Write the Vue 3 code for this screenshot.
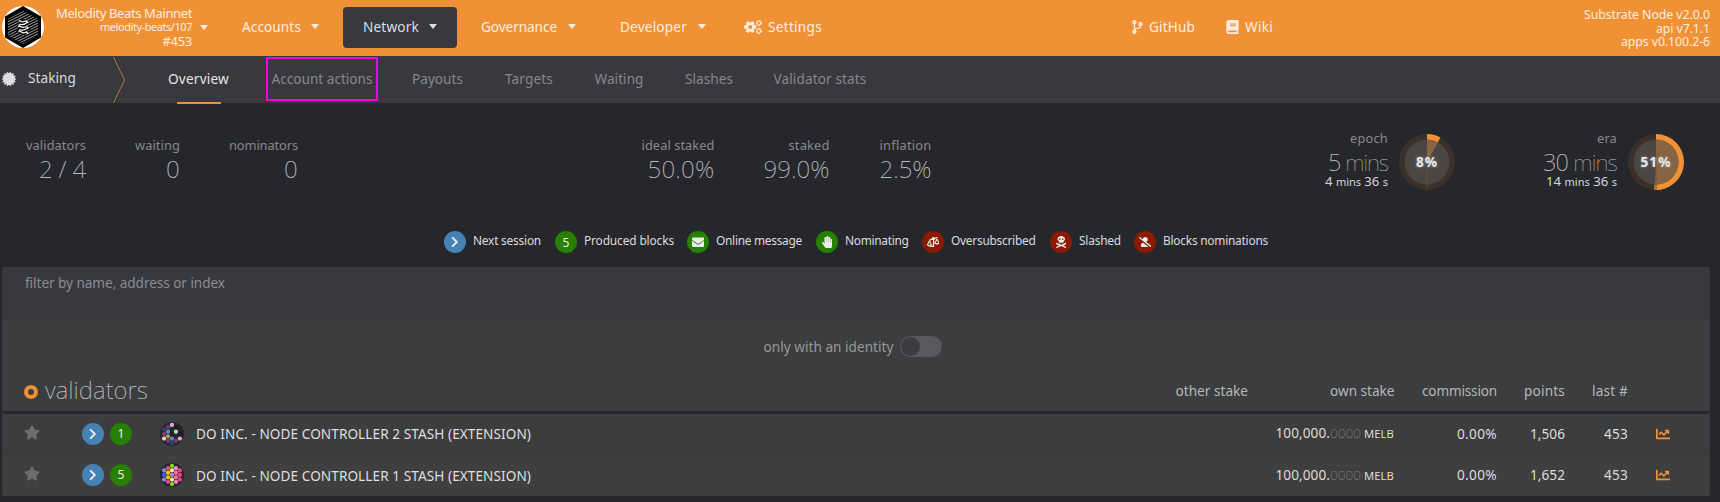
<script setup>
// Sets a label to its designed width by spreading the difference over its letters.
const vFit = {
  mounted(el, { value }) {
    const natural = el.getBoundingClientRect().width
    const count = el.textContent.trim().length
    el.style.letterSpacing = `${(value - natural) / count}px`
  }
}

const menu = [
  { label: 'Accounts', width: 59, active: false },
  { label: 'Network', width: 56, active: true },
  { label: 'Governance', width: 76, active: false },
  { label: 'Developer', width: 67, active: false }
]

const tabs = [
  { label: 'Overview', width: 61, active: true },
  { label: 'Account actions', width: 101, marked: true },
  { label: 'Payouts', width: 51 },
  { label: 'Targets', width: 48 },
  { label: 'Waiting', width: 49 },
  { label: 'Slashes', width: 48 },
  { label: 'Validator stats', width: 93 }
]

const counts = [
  { label: 'validators', lw: 60, value: '2 / 4', vw: 47 },
  { label: 'waiting', lw: 45, value: '0', vw: 14 },
  { label: 'nominators', lw: 69, value: '0', vw: 14 }
]

const rates = [
  { label: 'ideal staked', lw: 73, value: '50.0%', vw: 67 },
  { label: 'staked', lw: 41, value: '99.0%', vw: 66 },
  { label: 'inflation', lw: 52, value: '2.5%', vw: 52 }
]

function arc(pct, r) {
  const a = pct * 2 * Math.PI
  return `M28 28V${28 - r}A${r} ${r} 0 ${pct > 0.5 ? 1 : 0} 1 ${28 + r * Math.sin(a)} ${28 - r * Math.cos(a)}Z`
}

const timers = [
  { label: 'epoch', lw: 38, num: '5', vw: 60, rest: ['4', '36'], rw: 63, pct: 0.08, text: '8%', tw: 22 },
  { label: 'era', lw: 20, num: '30', vw: 74, rest: ['14', '36'], rw: 71, pct: 0.51, text: '51%', tw: 31 }
]

const icons = {
  chevron: { box: '0 0 320 512', d: 'M285.476 272.971L91.132 467.314c-9.373 9.373-24.569 9.373-33.941 0l-22.667-22.667c-9.357-9.357-9.375-24.522-.04-33.901L188.505 256 34.484 101.255c-9.335-9.379-9.317-24.544.04-33.901l22.667-22.667c9.373-9.373 24.569-9.373 33.941 0L285.475 239.03c9.373 9.372 9.373 24.568.001 33.941z' },
  envelope: { box: '0 0 512 512', d: 'M502.3 190.8c3.9-3.1 9.7-.2 9.7 4.7V400c0 26.5-21.5 48-48 48H48c-26.5 0-48-21.5-48-48V195.6c0-5 5.7-7.8 9.7-4.7 22.4 17.4 52.1 39.5 154.1 113.6 21.1 15.4 56.7 47.8 92.2 47.6 35.7.3 72-32.8 92.3-47.6 102-74.1 131.6-96.3 154-113.7zM256 320c23.2.4 56.6-29.2 73.4-41.4 132.7-96.3 142.8-104.7 173.4-128.7 5.8-4.5 9.2-11.5 9.2-18.9v-19c0-26.5-21.5-48-48-48H48c-26.5 0-48 21.5-48 48v19c0 7.4 3.4 14.3 9.2 18.9 30.6 23.9 40.7 32.4 173.4 128.7 16.8 12.2 50.2 41.8 73.4 41.4z' },
  hand: { box: '0 0 448 512', d: 'M408.781 128.007C386.356 127.578 368 146.36 368 168.79V256h-8V79.79c0-22.43-18.356-41.212-40.781-40.783C297.488 39.423 280 57.169 280 79v177h-8V40.79C272 18.36 253.644-.422 231.219.007 209.488.423 192 18.169 192 40v216h-8V80.79c0-22.43-18.356-41.212-40.781-40.783C121.488 40.423 104 58.169 104 80v235.992l-31.648-43.519c-12.993-17.866-38.009-21.817-55.877-8.823-17.865 12.994-21.815 38.01-8.822 55.877l125.601 172.705A48 48 0 0 0 172.073 512h197.59c22.274 0 41.622-15.324 46.724-37.006l26.508-112.66a192.011 192.011 0 0 0 5.104-43.975V168c.001-21.831-17.487-39.577-39.218-39.993z' },
  scale: { box: '0 0 640 512', d: 'M96 464v32c0 9 7 16 16 16h224c18 0 32-14 32-32V153c24-10 42-31 47-57l118-39c8-3 13-12 10-20l-10-31c-3-8-12-13-20-10L393 38C378 15 351 0 320 0c-44 0-80 36-80 80 0 4 1 7 1 11L107 136c-8 3-13 12-10 20l10 31c3 8 12 13 20 10l142-47c9 5 17 4 35 3v295H112c-9 0-16 7-16 16zM640 304c0-16 1-9-85-182-18-35-68-35-86 0-88 175-85 167-85 182 0 44 57 80 128 80s128-36 128-80zM512 160l72 144H440zM256 400c0-16 1-9-85-182-18-35-68-35-86 0C-3 393 0 385 0 400c0 44 57 80 128 80s128-36 128-80zM128 256l72 144H56z' },
  skull: { box: '0 0 448 512', d: 'M224 0C135 0 64 57 64 128c0 42 26 80 66 103v34c0 13 11 23 24 23h140c13 0 24-10 24-23v-34c40-23 66-61 66-103C384 57 313 0 224 0zM160 168a36 36 0 1 1 0-72 36 36 0 0 1 0 72zM288 168a36 36 0 1 1 0-72 36 36 0 0 1 0 72zM38 292c-8-4-18-1-22 7L2 328c-4 8-1 18 7 22l128 59L9 468c-8 4-11 14-7 22l14 14c4 8 14 11 22 7l186-84 186 84c8 4 18 1 22-7l14-14c4-8 1-18-7-22l-128-59 128-59c8-4 11-14 7-22l-14-29c-4-8-14-11-22-7l-186 82z' },
  slash: { box: '0 0 640 512', d: 'M633.8 458.1L362.3 248.3C412.1 230.7 448 183.8 448 128 448 57.3 390.7 0 320 0c-67.1 0-121.5 51.8-126.9 117.4L45.5 3.4C38.5-2 28.5-.8 23 6.2L3.4 31.4c-5.4 7-4.2 17 2.8 22.4l588.4 454.7c7 5.5 17 4.2 22.5-2.8l19.6-25.3c5.4-6.8 4.1-16.9-2.9-22.3zM96 422.4V464c0 26.5 21.5 48 48 48h350.2L207.4 290.3C144.2 301.3 96 356 96 422.4z' }
}

const legend = [
  { label: 'Next session', width: 68, color: 'blue', icon: 'chevron', pitch: 111 },
  { label: 'Produced blocks', width: 90, color: 'green', text: '5', pitch: 132 },
  { label: 'Online message', width: 86, color: 'green', icon: 'envelope', pitch: 129 },
  { label: 'Nominating', width: 63.5, color: 'green', icon: 'hand', pitch: 106 },
  { label: 'Oversubscribed', width: 84.5, color: 'red', icon: 'scale', pitch: 128 },
  { label: 'Slashed', width: 42, color: 'red', icon: 'skull', pitch: 84 },
  { label: 'Blocks nominations', width: 105, color: 'red', icon: 'slash', pitch: 140 }
]

const rows = [
  {
    name: 'DO INC. - NODE CONTROLLER 2 STASH (EXTENSION)', blocks: '1', points: '1,506',
    dots: [
      ['#3b3a78', '#7b3b80', '#e6d4b2'],
      ['#74397a', '#5b88b6', '#9ea651', '#7b3b80'],
      ['#dba8d0', '#14301c', '#33171f', '#5b88b6', '#3b3a78'],
      ['#1d1838', '#a8dcba', '#18331f', '#7b3b80'],
      ['#3b1a1c', '#1d1838', '#dfa8d4']
    ]
  },
  {
    name: 'DO INC. - NODE CONTROLLER 1 STASH (EXTENSION)', blocks: '5', points: '1,652',
    dots: [
      ['#9181f5', '#2f62f5', '#9181f5'],
      ['#ee4697', '#f2c714', '#f2c714', '#ee4697'],
      ['#7ade1c', '#f3ef83', '#bd86ea', '#f3ef83', '#7ade1c'],
      ['#f684c6', '#f5759c', '#f5759c', '#f684c6'],
      ['#f2418a', '#f2418a', '#f2418a']
    ]
  }
].map((row) => ({
  ...row,
  circles: row.dots.flatMap((col, i) =>
    col.map((fill, j) => ({ fill, cx: 12 + (i - 2) * 3.95, cy: 12 + (j - (col.length - 1) / 2) * 4.55 }))
  )
}))

// Toothed outline used by the seal and the gears.
function teeth(cx, cy, n, inner, outer, duty) {
  const pts = []
  for (let i = 0; i < n; i++) {
    const step = (2 * Math.PI) / n
    for (const [o, r] of [[-0.5 * duty, outer], [0.5 * duty, outer], [0.5 * duty + 0.12, inner], [0.88 - 0.5 * duty, inner]]) {
      const a = (i + o) * step
      pts.push(`${(cx + r * Math.cos(a)).toFixed(2)},${(cy + r * Math.sin(a)).toFixed(2)}`)
    }
  }
  return pts.join(' ')
}
const seal = teeth(7, 7, 14, 6, 7.1, 0.35)
const gear = teeth(6.2, 7, 6, 4.6, 6.3, 0.45)
const hatch = Array.from({ length: 16 }, (_, i) => -14 + i * 2.7)
</script>

<template>
  <div class="page">
    <header class="top">
      <svg class="logo" viewBox="0 0 42 42">
        <defs><clipPath id="hex"><path d="M21 5 36 13V29.5L21 38 6 29.5V13Z" /></clipPath></defs>
        <circle cx="21" cy="21" r="21" fill="#fff" />
        <path d="M21 0 39 10.4V31.6L21 42 3 31.6V10.4Z" fill="#050505" />
        <g clip-path="url(#hex)" stroke="#c4c4c4" stroke-width=".8">
          <path v-for="y in hatch" :key="y" :d="`M4 ${y + 20}L38 ${y + 3}`" />
        </g>
        <path d="M19 14 23 17 18 20 24 23 18 25 24 28" fill="none" stroke="#050505" stroke-width="4" />
        <path d="M17 14Q19 16.500 22 15.500T26 17M26 16Q22 19 19.500 18.500T16.500 21M17 19.500Q20 22 23 21T26 23M26 21.500Q22 25 19.500 24T17 26M18 25Q21 27.500 23 26.500T26 28" fill="none" stroke="#fff" stroke-width="1.2" />
      </svg>
      <div class="chain">
        <div><span v-fit="136">Melodity Beats Mainnet</span></div>
        <div class="small"><span v-fit="92">melodity-beats/107</span></div>
        <div class="block"><span v-fit="29.5">#453</span></div>
      </div>
      <i class="caret chain-caret"></i>
      <nav class="menu">
        <a v-for="m in menu" :key="m.label" :class="{ active: m.active }">
          <span v-fit="m.width">{{ m.label }}</span><i class="caret"></i>
        </a>
      </nav>
      <a class="settings">
        <svg width="18" height="14" viewBox="0 0 18 14">
          <polygon :points="gear" /><circle cx="6.2" cy="7" r="2.1" class="hole" />
          <circle cx="15" cy="3" r="2.1" class="ring" /><circle cx="15" cy="11" r="2.1" class="ring" />
        </svg>
        <span v-fit="54">Settings</span>
      </a>
      <a class="github">
        <svg width="11" height="14" viewBox="0 0 384 512"><path d="M384 144c0-44.2-35.8-80-80-80s-80 35.8-80 80c0 36.4 24.3 67.1 57.5 76.8-.6 16.1-4.2 28.5-11 36.9-15.4 19.2-49.3 22.4-85.2 25.7-28.2 2.6-57.4 5.4-81.3 16.9v-144c32.5-10.2 56-40.5 56-76.3 0-44.2-35.8-80-80-80S0 35.8 0 80c0 35.8 23.5 66.1 56 76.3v199.3C23.5 365.9 0 396.2 0 432c0 44.2 35.8 80 80 80s80-35.8 80-80c0-34-21.2-63.1-51.2-74.6 3.1-5.2 7.8-9.8 14.9-13.4 16.2-8.2 40.4-10.4 66.1-12.8 42.2-3.9 90-8.4 118.2-43.4 14-17.4 21.1-39.8 21.6-67.9 31.6-10.8 54.4-40.7 54.4-75.9zM80 64c8.8 0 16 7.2 16 16s-7.2 16-16 16-16-7.2-16-16 7.2-16 16-16zm0 384c-8.8 0-16-7.2-16-16s7.2-16 16-16 16 7.2 16 16-7.2 16-16 16zm224-320c8.8 0 16 7.2 16 16s-7.2 16-16 16-16-7.2-16-16 7.2-16 16-16z" /></svg>
        <span v-fit="46">GitHub</span>
      </a>
      <a class="wiki">
        <svg width="13" height="14" viewBox="0 0 448 512"><path d="M448 360V24c0-13.3-10.7-24-24-24H96C43 0 0 43 0 96v320c0 53 43 96 96 96h328c13.3 0 24-10.7 24-24v-16c0-7.5-3.5-14.3-8.900-18.700-4.200-15.400-4.200-59.300 0-74.700 5.400-4.300 8.900-11.100 8.900-18.600zM128 134c0-3.300 2.700-6 6-6h212c3.300 0 6 2.700 6 6v20c0 3.300-2.700 6-6 6H134c-3.300 0-6-2.700-6-6v-20zm0 64c0-3.300 2.700-6 6-6h212c3.300 0 6 2.700 6 6v20c0 3.300-2.700 6-6 6H134c-3.300 0-6-2.700-6-6v-20zm253.400 250H96c-17.700 0-32-14.300-32-32 0-17.600 14.400-32 32-32h285.400c-1.900 17.100-1.900 46.900 0 64z" /></svg>
        <span v-fit="28">Wiki</span>
      </a>
      <div class="versions">
        <div><span v-fit="126">Substrate Node v2.0.0</span></div>
        <div><span v-fit="54">api v7.1.1</span></div>
        <div><span v-fit="89">apps v0.100.2-6</span></div>
      </div>
    </header>

    <div class="sub">
      <svg class="seal" width="14" height="14" viewBox="0 0 14 14"><polygon :points="seal" /></svg>
      <span class="section"><span v-fit="48">Staking</span></span>
      <svg class="divider" width="12" height="46" viewBox="0 0 12 46"><path d="M.5 0 11.5 23 .5 46" /></svg>
      <div class="tabs">
        <a v-for="t in tabs" :key="t.label" :class="{ active: t.active, marked: t.marked }"><span v-fit="t.width">{{ t.label }}</span></a>
      </div>
    </div>

    <section class="summary">
      <div class="counts">
        <div v-for="c in counts" :key="c.label" class="stat">
          <div class="label"><span v-fit="c.lw">{{ c.label }}</span></div>
          <div class="value"><span v-fit="c.vw">{{ c.value }}</span></div>
        </div>
      </div>
      <div class="rates">
        <div v-for="c in rates" :key="c.label" class="stat">
          <div class="label"><span v-fit="c.lw">{{ c.label }}</span></div>
          <div class="value"><span v-fit="c.vw">{{ c.value }}</span></div>
        </div>
      </div>
      <div class="timers">
        <div v-for="t in timers" :key="t.label" class="timer">
          <div class="stat">
            <div class="label"><span v-fit="t.lw">{{ t.label }}</span></div>
            <div class="value"><span v-fit="t.vw">{{ t.num }} <span class="thin">mins</span></span></div>
            <div class="rest"><span v-fit="t.rw">{{ t.rest[0] }} <small>mins</small> {{ t.rest[1] }} <small>s</small></span></div>
          </div>
          <div class="gauge">
            <svg width="56" height="56" viewBox="0 0 56 56">
              <circle cx="28" cy="28" r="28" fill="#3c302b" />
              <path :d="arc(t.pct, 28)" fill="#f19135" />
              <path d="M28 28V56" stroke="#6b4829" />
              <circle cx="28" cy="28" r="22.5" fill="#4a4642" />
              <path :d="arc(t.pct, 22.5)" fill="#876543" />
              <path d="M28 28V50.5" stroke="#65513e" stroke-width=".8" />
            </svg>
            <b><span v-fit="t.tw">{{ t.text }}</span></b>
          </div>
        </div>
      </div>
    </section>

    <div class="legend">
      <div v-for="l in legend" :key="l.label" class="entry" :style="{ width: l.pitch + 'px' }">
        <span class="badge" :class="l.color">
          <svg v-if="l.icon" :class="l.icon" :viewBox="icons[l.icon].box"><path :d="icons[l.icon].d" fill-rule="evenodd" /></svg>
          <template v-else>{{ l.text }}</template>
        </span>
        <span v-fit="l.width">{{ l.label }}</span>
      </div>
    </div>

    <section class="table">
      <div class="filter"><span v-fit="200">filter by name, address or index</span></div>
      <div class="identity"><span v-fit="130">only with an identity</span><i class="toggle"></i></div>
      <div class="head">
        <div class="title"><i class="ring-dot"></i><span v-fit="103">validators</span></div>
        <div class="cell"><span v-fit="72.5">other stake</span></div>
        <div class="cell"><span v-fit="64.5">own stake</span></div>
        <div class="cell"><span v-fit="75">commission</span></div>
        <div class="cell"><span v-fit="41">points</span></div>
        <div class="cell"><span v-fit="36">last #</span></div>
      </div>
      <div v-for="r in rows" :key="r.name" class="row">
        <svg class="star" width="16" height="15" viewBox="0 0 576 512"><path d="M259.3 17.8L194 150.2 47.9 171.5c-26.2 3.8-36.7 36.1-17.7 54.6l105.7 103-25 145.5c-4.5 26.3 23.2 46 46.4 33.7L288 439.6l130.7 68.7c23.2 12.2 50.9-7.4 46.4-33.7l-25-145.5 105.7-103c19-18.5 8.5-50.8-17.7-54.6L382 150.2 316.7 17.8c-11.7-23.6-45.6-23.9-57.4 0z" /></svg>
        <div class="badges">
          <span class="badge blue"><svg class="chevron" viewBox="0 0 320 512"><path :d="icons.chevron.d" /></svg></span>
          <span class="badge green">{{ r.blocks }}</span>
        </div>
        <svg class="identicon" width="24" height="24" viewBox="0 0 24 24">
          <circle cx="12" cy="12" r="12" fill="#272529" />
          <circle v-for="(c, i) in r.circles" :key="i" :cx="c.cx" :cy="c.cy" r="2.15" :fill="c.fill" />
        </svg>
        <div class="name"><span v-fit="335">{{ r.name }}</span></div>
        <div class="cell stake">
          <span v-fit="54.500">100,000.</span><span v-fit="31" class="decimals">0000</span><span v-fit="30" class="unit">MELB</span>
        </div>
        <div class="cell"><span v-fit="40">0.00%</span></div>
        <div class="cell"><span v-fit="35">{{ r.points }}</span></div>
        <div class="cell"><span v-fit="24">453</span></div>
        <svg class="chart" width="14" height="14" viewBox="0 0 512 512"><path d="M496 384H64V80c0-8.84-7.16-16-16-16H16C7.16 64 0 71.16 0 80v336c0 17.67 14.33 32 32 32h464c8.84 0 16-7.16 16-16v-32c0-8.84-7.16-16-16-16zM464 96H345.94c-21.38 0-32.09 25.85-16.97 40.97l32.4 32.4L288 242.75l-73.37-73.37c-12.5-12.5-32.76-12.5-45.25 0l-68.69 68.69c-6.25 6.25-6.25 16.38 0 22.63l22.62 22.62c6.25 6.25 16.38 6.25 22.63 0L192 237.25l73.37 73.37c12.5 12.5 32.76 12.5 45.25 0l96-96 32.4 32.4c15.12 15.12 40.97 4.41 40.97-16.97V112c.01-8.84-7.15-16-15.99-16z" /></svg>
      </div>
    </section>
  </div>
</template>

<style>
body {
  background: #26272c;
}
</style>

<style scoped>
.page {
  width: 1720px;
  height: 502px;
  overflow: hidden;
  background: #26272c;
  color: #dcdcdc;
  font: 13.6px/20px 'Noto Sans', 'Open Sans', sans-serif;
  white-space: nowrap;
}
.page * {
  box-sizing: border-box;
}
.top {
  display: flex;
  height: 56px;
  background: #f19135;
  color: #fdeee0;
  fill: #fdeee0;
}
.top > a,
.menu > a {
  display: flex;
  align-items: center;
  height: 41px;
  margin-top: 7px;
  padding-bottom: 2px;
}
.logo {
  width: 42px;
  height: 42px;
  margin: 6px 0 0 2px;
}
.chain {
  width: 148px;
  padding-top: 6px;
  font-size: 13px;
  line-height: 14px;
  text-align: right;
}
.chain .small {
  font-size: 11px;
  line-height: 14px;
}
.caret {
  width: 0;
  border: 4.5px solid transparent;
  border-top: 5px solid currentColor;
  border-bottom: 0;
}
.chain-caret {
  margin: 25px 0 0 7.5px;
  height: 0;
}
.menu {
  display: flex;
  width: 522px;
  margin-left: 14.5px;
}
.menu > a {
  flex: none;
  justify-content: space-between;
  padding-left: 20px;
  padding-right: 20px;
  border-radius: 4px;
}
.menu > a:nth-child(1) { width: 117px; }
.menu > a:nth-child(2) { width: 114px; margin-left: 4px; }
.menu > a:nth-child(3) { width: 135px; margin-left: 4px; }
.menu > a:nth-child(4) { width: 126px; margin-left: 4px; }
.menu > .active {
  background: #38393f;
  color: #dededf;
}
.settings {
  width: 388px;
}
.settings svg {
  margin-right: 6px;
}
.hole {
  fill: #f19135;
}
.ring {
  fill: none;
  stroke: #fdeee0;
  stroke-width: 1.7;
  stroke-dasharray: 1.7 0.5;
}
.github {
  width: 94px;
}
.github svg,
.wiki svg {
  margin-right: 6px;
}
.versions {
  margin-left: auto;
  padding: 8px 10px 0 0;
  font-size: 12.3px;
  line-height: 13.5px;
  text-align: right;
}
.sub {
  display: flex;
  height: 47px;
  background: #38393f;
}
.seal {
  margin: 16px 12px 0 2px;
  fill: #dedede;
}
.section {
  width: 85px;
  padding-top: 12px;
}
.divider {
  margin-top: 1px;
  fill: none;
  stroke: #b67438;
}
.tabs {
  display: flex;
  margin-left: 20px;
  color: #86878a;
}
.tabs a {
  display: flex;
  flex-direction: column;
  align-items: center;
  height: 44px;
  margin: 1px 0 0 21px;
  padding-top: 10px;
  border: 2px solid transparent;
}
.tabs a:nth-child(3) { margin-left: 32px; }
.tabs a:nth-child(4) { margin-left: 38px; }
.tabs a:nth-child(5) { margin-left: 37.5px; }
.tabs a:nth-child(6) { margin-left: 37.5px; }
.tabs a:nth-child(7) { margin-left: 36.500px; }
.tabs .marked {
  width: 112px;
  margin-left: 35px;
  border-color: #ff00dc;
}
.tabs .active {
  height: 49px;
  color: #e3e3e4;
}
.tabs .active::after {
  content: '';
  flex: none;
  width: 44px;
  height: 2px;
  margin-top: 13px;
  background: #f19135;
}
.summary {
  display: flex;
  height: 128px;
  color: #b9babc;
}
.stat {
  text-align: right;
}
.label {
  height: 20px;
  color: #87888b;
  font-size: 12.8px;
}
.value {
  height: 30px;
  font-size: 24px;
  font-weight: 200;
  line-height: 28px;
}
.counts,
.rates {
  display: flex;
  padding-top: 32px;
}
.counts {
  width: 616px;
}
.rates {
  width: 684px;
}
.counts .stat:nth-child(1) { width: 86px; }
.counts .stat:nth-child(2) { width: 94px; }
.counts .stat:nth-child(3) { width: 118px; }
.rates .stat:nth-child(1) { width: 98.5px; }
.rates .stat:nth-child(2) { width: 115px; }
.rates .stat:nth-child(3) { width: 102px; }
.timers {
  display: flex;
  padding-top: 25px;
}
.timer {
  display: flex;
}
.timer .stat {
  width: 88px;
}
.timer + .timer .stat {
  width: 162px;
}
.timer .value {
  font-size: 23.5px;
}
.thin {
  font-size: 22.5px;
  font-weight: 100;
}
.rest {
  height: 14px;
  margin-top: -6px;
  color: #d6d6d6;
  font-size: 13.2px;
  line-height: 19px;
}
.rest small {
  font-size: 11px;
}
.gauge {
  display: grid;
  height: 56px;
  margin: 6px 0 0 11px;
}
.gauge > * {
  grid-area: 1 / 1;
}
.gauge b {
  place-self: center;
  color: #e8e8e8;
  font-size: 13.6px;
  text-shadow: 0 0 3px #999;
}
.legend {
  display: flex;
  height: 36px;
  padding-left: 444px;
}
.entry {
  display: flex;
  gap: 7px;
  height: 22px;
  font-size: 11.9px;
  line-height: 19px;
}
.badge {
  display: flex;
  flex: none;
  align-items: center;
  justify-content: center;
  width: 22px;
  height: 22px;
  border-radius: 50%;
  color: #ececec;
  fill: #ececec;
  font-size: 12px;
}
.badge svg {
  height: 11px;
}
.badge .chevron {
  height: 12px;
}
.badge .slash {
  height: 10px;
}
.badge .scale {
  height: 10px;
}
.badge .skull,
.badge .hand {
  height: 12px;
}
.badge .envelope {
  height: 12.5px;
}
.blue { background: #4682b4; }
.green { background: #278000; }
.red { background: #8b1a00; }
.table {
  width: 1708px;
  height: 229px;
  margin-left: 2px;
  border: 1px solid #36373a;
  border-top: 0;
  border-radius: 4px;
  background: #3c3d3f;
}
.filter {
  height: 52px;
  padding: 6px 0 0 22px;
  border-bottom: 1px solid #35363b;
  background: #38393f;
  color: #8b8c8f;
  line-height: 20px;
}
.identity {
  display: flex;
  align-items: center;
  height: 55px;
  padding-left: 760.5px;
  color: #98999a;
}
.toggle {
  width: 42px;
  height: 21px;
  margin-left: 6.5px;
  padding: 1px;
  border-radius: 11px;
  background: #58595f;
}
.toggle::before {
  content: '';
  display: block;
  width: 19px;
  height: 19px;
  border-radius: 50%;
  background: #3c3d3f;
}
.head,
.row {
  display: grid;
  align-items: center;
}
.head {
  grid-template-columns: 1000px 245px 146.500px 102.500px 68px 63px;
  height: 40px;
  padding-bottom: 4px;
  border-bottom: 3px solid #26272c;
  color: #b6b6b6;
}
.title {
  display: flex;
  align-items: center;
  margin-top: -2px;
  color: #b9b9ba;
  font-size: 24px;
  font-weight: 200;
}
.ring-dot {
  width: 14px;
  height: 14px;
  margin: 4px 7px 0 21px;
  border: 4.8px solid #f19135;
  border-radius: 50%;
}
.cell {
  text-align: right;
}
.row {
  grid-template-columns: 79px 78px 36px 999px 199px 103px 68px 63px 50px;
  height: 41px;
  padding-bottom: 1px;
  border-bottom: 1px solid #35363a;
}
.row + .row {
  border-bottom: 0;
  background: #3f3f3f;
}
.star {
  margin: -3px 0 0 21px;
  fill: #6b6c6d;
}
.badges {
  display: flex;
  gap: 6px;
}
.name {
  padding-top: 1px;
  color: #dfdfdf;
}
.stake {
  display: flex;
  justify-content: flex-end;
  align-items: baseline;
}
.decimals {
  color: #808080;
  font-weight: 200;
}
.unit {
  margin-left: 3px;
  font-size: 11.2px;
}
.chart {
  margin-left: 28px;
  fill: #f19135;
}
</style>
